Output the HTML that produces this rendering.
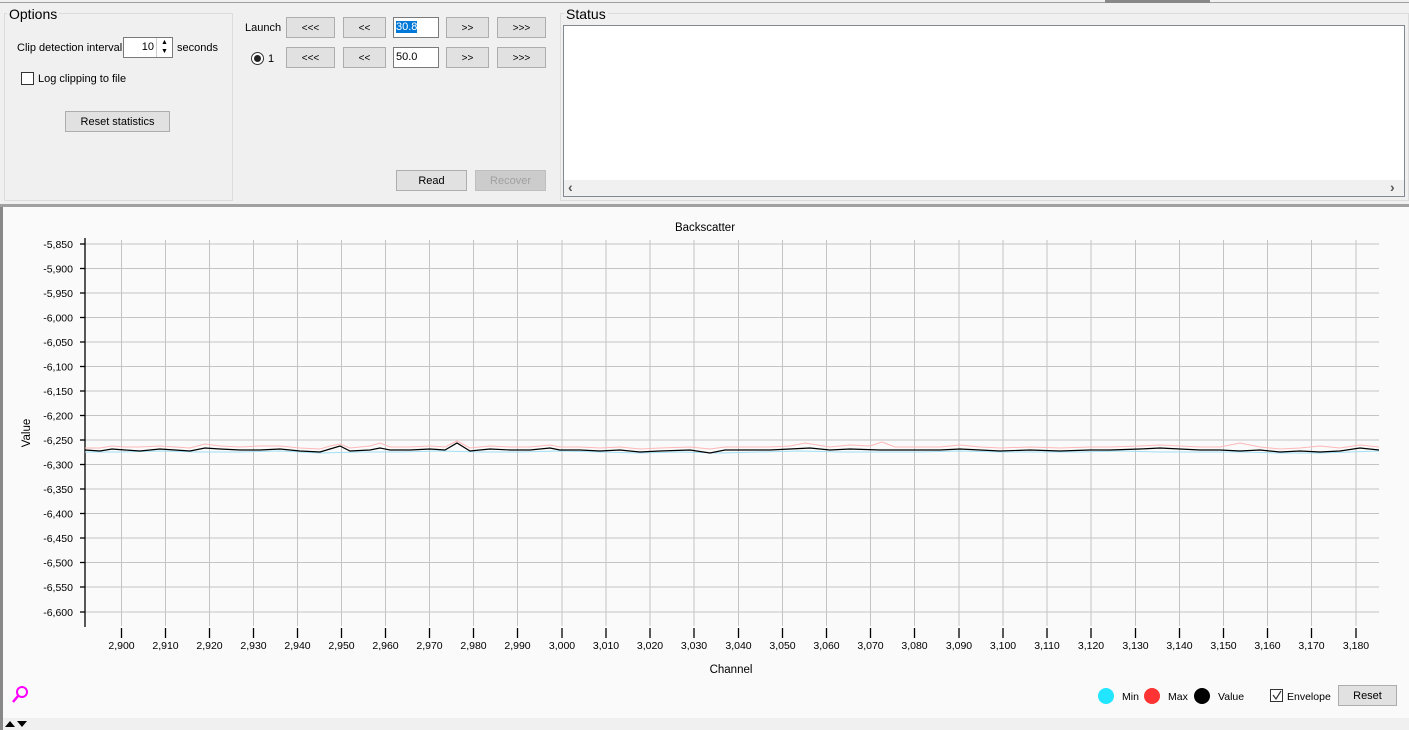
<!DOCTYPE html>
<html><head><style>
*{box-sizing:border-box;margin:0;padding:0}
body{width:1409px;height:730px;overflow:hidden;background:#f0f0f0;font-family:"Liberation Sans",sans-serif;font-size:11px;color:#000;position:relative}
.a{position:absolute}
.btn{position:absolute;background:#e1e1e1;border:1px solid #adadad;text-align:center;font-size:10px;line-height:21px;height:21px}
.inp{position:absolute;background:#fff;border:1px solid #7a7a7a;height:21px;line-height:19px;padding-left:2px;font-size:11px}
.grp{position:absolute;border:1px solid #dcdcdc}
.lbl{position:absolute;background:#f0f0f0;font-size:14px;padding:0 2px;line-height:14px}
</style></head><body>
<div class="a" style="left:0;top:0;width:1409px;height:3px;border-bottom:1px solid #a0a0a0"></div>
<div class="a" style="left:1105px;top:0;width:105px;height:3px;background:#888"></div>

<div class="grp" style="left:4px;top:13px;width:229px;height:188px"></div>
<div class="lbl" style="left:7px;top:7px">Options</div>
<div class="a" style="left:17px;top:42px">Clip detection interval</div>
<div class="inp" style="left:123px;top:37px;width:50px;text-align:right;padding-right:18px">10</div>
<div class="a" style="left:156px;top:38px;width:16px;height:19px;border-left:1px solid #ccc;font-size:7px;line-height:9px;text-align:center">▲<br>▼</div>
<div class="a" style="left:177px;top:42px">seconds</div>
<div class="a" style="left:21px;top:72px;width:13px;height:13px;border:1px solid #333;background:#fff"></div>
<div class="a" style="left:38px;top:73px">Log clipping to file</div>
<div class="btn" style="left:65px;top:111px;width:105px;font-size:11px">Reset statistics</div>

<div class="a" style="left:245px;top:22px">Launch</div>
<div class="btn" style="left:286px;top:17px;width:49px">&lt;&lt;&lt;</div>
<div class="btn" style="left:343px;top:17px;width:43px">&lt;&lt;</div>
<div class="inp" style="left:393px;top:17px;width:46px"><span style="background:#0078d7;color:#fff">30.8</span></div>
<div class="btn" style="left:446px;top:17px;width:43px">&gt;&gt;</div>
<div class="btn" style="left:497px;top:17px;width:49px">&gt;&gt;&gt;</div>
<div class="a" style="left:251px;top:52px;width:13px;height:13px;border-radius:50%;border:1px solid #333;background:#fff"><div class="a" style="left:2px;top:2px;width:7px;height:7px;border-radius:50%;background:#222"></div></div>
<div class="a" style="left:268px;top:53px">1</div>
<div class="btn" style="left:286px;top:47px;width:49px">&lt;&lt;&lt;</div>
<div class="btn" style="left:343px;top:47px;width:43px">&lt;&lt;</div>
<div class="inp" style="left:393px;top:47px;width:46px">50.0</div>
<div class="btn" style="left:446px;top:47px;width:43px">&gt;&gt;</div>
<div class="btn" style="left:497px;top:47px;width:49px">&gt;&gt;&gt;</div>
<div class="btn" style="left:396px;top:170px;width:71px;font-size:11px">Read</div>
<div class="btn" style="left:475px;top:170px;width:71px;font-size:11px;color:#a0a0a0;background:#ccc;border-color:#bfbfbf">Recover</div>

<div class="grp" style="left:560px;top:13px;width:849px;height:188px"></div>
<div class="lbl" style="left:564px;top:7px">Status</div>
<div class="a" style="left:563px;top:25px;width:842px;height:172px;border:1px solid #828790;background:#fff"></div>
<div class="a" style="left:564px;top:180px;width:840px;height:16px;background:#f0f0f0"></div>
<div class="a" style="left:568px;top:179px;font-size:14px;color:#555;font-weight:bold">&lsaquo;</div>
<div class="a" style="left:1390px;top:179px;font-size:14px;color:#555;font-weight:bold">&rsaquo;</div>

<div class="a" style="left:0;top:204px;width:1409px;height:3px;background:#a0a0a0"></div>
<div class="a" style="left:0;top:207px;width:1409px;height:511px;background:#fafafa;border-left:3px solid #888"></div>
<div class="a" style="left:0;top:718px;width:1409px;height:12px;background:#f0f0f0;border-left:3px solid #888"></div>
<svg class="a" style="left:5px;top:720px" width="26" height="8"><polygon points="0,7 5,1 10,7" fill="#000"/><polygon points="12,1 22,1 17,7" fill="#000"/></svg>

<svg class="a" style="left:0;top:0" width="1409" height="730" font-family="Liberation Sans" font-size="10.5">
<g stroke="#c4c4c4" stroke-width="1">
<line x1="85" x2="1379" y1="244" y2="244"/><line x1="85" x2="1379" y1="268.5" y2="268.5"/><line x1="85" x2="1379" y1="293" y2="293"/><line x1="85" x2="1379" y1="317.5" y2="317.5"/><line x1="85" x2="1379" y1="342" y2="342"/><line x1="85" x2="1379" y1="366.5" y2="366.5"/><line x1="85" x2="1379" y1="391" y2="391"/><line x1="85" x2="1379" y1="415.5" y2="415.5"/><line x1="85" x2="1379" y1="440" y2="440"/><line x1="85" x2="1379" y1="464.5" y2="464.5"/><line x1="85" x2="1379" y1="489" y2="489"/><line x1="85" x2="1379" y1="513.5" y2="513.5"/><line x1="85" x2="1379" y1="538" y2="538"/><line x1="85" x2="1379" y1="562.5" y2="562.5"/><line x1="85" x2="1379" y1="587" y2="587"/><line x1="85" x2="1379" y1="612" y2="612"/>
<line y1="240" y2="626" x1="121.5" x2="121.5"/><line y1="240" y2="626" x1="165.5" x2="165.5"/><line y1="240" y2="626" x1="209.5" x2="209.5"/><line y1="240" y2="626" x1="253.5" x2="253.5"/><line y1="240" y2="626" x1="297.5" x2="297.5"/><line y1="240" y2="626" x1="341.5" x2="341.5"/><line y1="240" y2="626" x1="385.5" x2="385.5"/><line y1="240" y2="626" x1="429.5" x2="429.5"/><line y1="240" y2="626" x1="473.5" x2="473.5"/><line y1="240" y2="626" x1="517.5" x2="517.5"/><line y1="240" y2="626" x1="562" x2="562"/><line y1="240" y2="626" x1="606" x2="606"/><line y1="240" y2="626" x1="650" x2="650"/><line y1="240" y2="626" x1="694" x2="694"/><line y1="240" y2="626" x1="738.5" x2="738.5"/><line y1="240" y2="626" x1="782.5" x2="782.5"/><line y1="240" y2="626" x1="826.5" x2="826.5"/><line y1="240" y2="626" x1="870.5" x2="870.5"/><line y1="240" y2="626" x1="914.5" x2="914.5"/><line y1="240" y2="626" x1="959" x2="959"/><line y1="240" y2="626" x1="1003" x2="1003"/><line y1="240" y2="626" x1="1047" x2="1047"/><line y1="240" y2="626" x1="1091" x2="1091"/><line y1="240" y2="626" x1="1135.5" x2="1135.5"/><line y1="240" y2="626" x1="1179.5" x2="1179.5"/><line y1="240" y2="626" x1="1223.5" x2="1223.5"/><line y1="240" y2="626" x1="1267.5" x2="1267.5"/><line y1="240" y2="626" x1="1311.5" x2="1311.5"/><line y1="240" y2="626" x1="1356" x2="1356"/>
</g>
<g stroke="#000" stroke-width="1.3">
<line x1="85" x2="85" y1="238" y2="627"/>
<line x1="80" x2="85" y1="244" y2="244"/><line x1="80" x2="85" y1="268.5" y2="268.5"/><line x1="80" x2="85" y1="293" y2="293"/><line x1="80" x2="85" y1="317.5" y2="317.5"/><line x1="80" x2="85" y1="342" y2="342"/><line x1="80" x2="85" y1="366.5" y2="366.5"/><line x1="80" x2="85" y1="391" y2="391"/><line x1="80" x2="85" y1="415.5" y2="415.5"/><line x1="80" x2="85" y1="440" y2="440"/><line x1="80" x2="85" y1="464.5" y2="464.5"/><line x1="80" x2="85" y1="489" y2="489"/><line x1="80" x2="85" y1="513.5" y2="513.5"/><line x1="80" x2="85" y1="538" y2="538"/><line x1="80" x2="85" y1="562.5" y2="562.5"/><line x1="80" x2="85" y1="587" y2="587"/><line x1="80" x2="85" y1="612" y2="612"/>
<g transform="translate(0,628)"><line y1="0" y2="10" x1="121.5" x2="121.5"/><line y1="0" y2="10" x1="165.5" x2="165.5"/><line y1="0" y2="10" x1="209.5" x2="209.5"/><line y1="0" y2="10" x1="253.5" x2="253.5"/><line y1="0" y2="10" x1="297.5" x2="297.5"/><line y1="0" y2="10" x1="341.5" x2="341.5"/><line y1="0" y2="10" x1="385.5" x2="385.5"/><line y1="0" y2="10" x1="429.5" x2="429.5"/><line y1="0" y2="10" x1="473.5" x2="473.5"/><line y1="0" y2="10" x1="517.5" x2="517.5"/><line y1="0" y2="10" x1="562" x2="562"/><line y1="0" y2="10" x1="606" x2="606"/><line y1="0" y2="10" x1="650" x2="650"/><line y1="0" y2="10" x1="694" x2="694"/><line y1="0" y2="10" x1="738.5" x2="738.5"/><line y1="0" y2="10" x1="782.5" x2="782.5"/><line y1="0" y2="10" x1="826.5" x2="826.5"/><line y1="0" y2="10" x1="870.5" x2="870.5"/><line y1="0" y2="10" x1="914.5" x2="914.5"/><line y1="0" y2="10" x1="959" x2="959"/><line y1="0" y2="10" x1="1003" x2="1003"/><line y1="0" y2="10" x1="1047" x2="1047"/><line y1="0" y2="10" x1="1091" x2="1091"/><line y1="0" y2="10" x1="1135.5" x2="1135.5"/><line y1="0" y2="10" x1="1179.5" x2="1179.5"/><line y1="0" y2="10" x1="1223.5" x2="1223.5"/><line y1="0" y2="10" x1="1267.5" x2="1267.5"/><line y1="0" y2="10" x1="1311.5" x2="1311.5"/><line y1="0" y2="10" x1="1356" x2="1356"/></g>
</g>
<g text-anchor="end">
<text x="73" y="248">-5,850</text><text x="73" y="272.5">-5,900</text><text x="73" y="297">-5,950</text><text x="73" y="321.5">-6,000</text><text x="73" y="346">-6,050</text><text x="73" y="370.5">-6,100</text><text x="73" y="395">-6,150</text><text x="73" y="419.5">-6,200</text><text x="73" y="444">-6,250</text><text x="73" y="468.5">-6,300</text><text x="73" y="493">-6,350</text><text x="73" y="517.5">-6,400</text><text x="73" y="542">-6,450</text><text x="73" y="566.5">-6,500</text><text x="73" y="591">-6,550</text><text x="73" y="616">-6,600</text>
</g>
<g text-anchor="middle">
<text x="121.5" y="649">2,900</text><text x="165.5" y="649">2,910</text><text x="209.5" y="649">2,920</text><text x="253.5" y="649">2,930</text><text x="297.5" y="649">2,940</text><text x="341.5" y="649">2,950</text><text x="385.5" y="649">2,960</text><text x="429.5" y="649">2,970</text><text x="473.5" y="649">2,980</text><text x="517.5" y="649">2,990</text><text x="562" y="649">3,000</text><text x="606" y="649">3,010</text><text x="650" y="649">3,020</text><text x="694" y="649">3,030</text><text x="738.5" y="649">3,040</text><text x="782.5" y="649">3,050</text><text x="826.5" y="649">3,060</text><text x="870.5" y="649">3,070</text><text x="914.5" y="649">3,080</text><text x="959" y="649">3,090</text><text x="1003" y="649">3,100</text><text x="1047" y="649">3,110</text><text x="1091" y="649">3,120</text><text x="1135.5" y="649">3,130</text><text x="1179.5" y="649">3,140</text><text x="1223.5" y="649">3,150</text><text x="1267.5" y="649">3,160</text><text x="1311.5" y="649">3,170</text><text x="1356" y="649">3,180</text>
<text x="705" y="231" font-size="11.5">Backscatter</text>
<text x="731" y="673" font-size="11.5">Channel</text>
</g>
<text x="26" y="433" font-size="11.5" text-anchor="middle" transform="rotate(-90 26 433)" dy="4">Value</text>
<polyline fill="none" stroke="#ffb8b8" stroke-width="1" points="85,448 100,448 112,446 125,447 140,447 160,446 175,447 190,448 205,444 220,446 240,447 260,446 280,446 300,448 320,449 330,446 340,444 350,448 370,446 380,443 390,447 410,447 430,446 445,447 457,441 470,448 490,446 510,447 530,447 550,445 560,447 580,447 600,448 620,447 640,449 660,448 690,447 710,449 725,447 750,447 770,447 790,446 805,443 830,447 850,445 870,446 882,442 895,447 910,447 940,447 960,445 980,447 1000,448 1030,447 1060,448 1090,447 1110,447 1140,446 1160,445 1180,446 1200,447 1220,447 1240,443 1260,447 1280,449 1300,448 1320,446 1340,448 1360,445 1379,447"/>
<polyline fill="none" stroke="#9fe0f5" stroke-width="1" points="85,452 120,452 160,451 200,452 240,452 280,451 320,453 360,452 400,452 440,451 480,452 520,452 560,451 600,452 640,453 680,452 720,453 760,452 800,451 840,452 880,452 920,452 960,451 1000,452 1040,452 1080,452 1120,451 1160,452 1200,452 1240,452 1280,453 1320,453 1379,451"/>
<polyline fill="none" stroke="#000" stroke-width="1.2" points="85,450 100,451 112,449 125,450 140,451 160,449 175,450 190,451 205,448 220,449 240,450 260,450 280,449 300,451 320,452 330,449 340,446 350,451 370,450 380,448 390,450 410,450 430,449 445,450 457,443 470,451 490,449 510,450 530,450 550,448 560,450 580,450 600,451 620,450 640,452 660,451 690,450 710,453 725,450 750,450 770,450 790,449 810,448 830,450 850,449 880,450 910,450 940,450 960,449 980,450 1000,451 1030,450 1060,451 1090,450 1110,450 1140,449 1160,448 1180,449 1200,450 1220,450 1240,451 1260,450 1280,452 1300,451 1320,452 1340,451 1360,448 1379,450"/>
<circle cx="22" cy="692" r="5" fill="none" stroke="#ff00ff" stroke-width="2"/>
<line x1="18" y1="696" x2="13" y2="702" stroke="#ff00ff" stroke-width="2.5"/>
<circle cx="1106" cy="696" r="8" fill="#22e6ff"/>
<text x="1122" y="700">Min</text>
<circle cx="1152" cy="696" r="8" fill="#ff3333"/>
<text x="1168" y="700">Max</text>
<circle cx="1202" cy="696" r="8" fill="#000"/>
<text x="1218" y="700">Value</text>
<rect x="1270.5" y="689.5" width="12" height="12" fill="#fff" stroke="#333"/>
<polyline points="1273,695 1276,699 1281,691" fill="none" stroke="#333" stroke-width="1.2"/>
<text x="1287" y="700">Envelope</text>
</svg>
<div class="btn" style="left:1338px;top:685px;width:59px;font-size:11px">Reset</div>
</body></html>
